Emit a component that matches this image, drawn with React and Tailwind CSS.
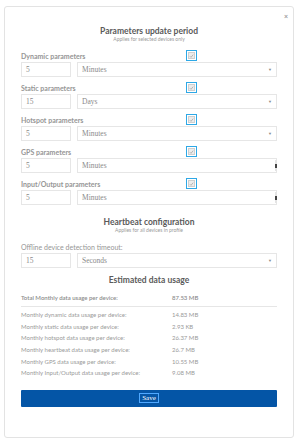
import React from "react";

const lato = { fontFamily: "Lato, 'Open Sans', sans-serif" };

// Blue-outlined checked box next to each parameter label
const Check = () => (
  <span className="absolute left-[165px] top-0 w-[11px] h-[11px] border border-[#2ea8e6] bg-white flex items-center justify-center">
    <span className="w-[7px] h-[7px] bg-[#ececec] border border-[#cfcfcf] flex items-center justify-center">
      <svg width="6" height="6" viewBox="0 0 6 6">
        <path d="M1 3.2 L2.4 4.6 L5 1.4" fill="none" stroke="#9a9a9a" strokeWidth="0.8" />
      </svg>
    </span>
  </span>
);

// Number box + unit select
const InputRow = ({ value, unit, spinner }) => (
  <div className="flex gap-[6px] h-[15px]">
    <div className="w-[50px] h-full border border-[#e6e6e6] bg-white flex items-center pl-[4px] text-[7.5px] text-[#8a8a8a] font-['Liberation_Serif',serif]">
      {value}
    </div>
    <div className="relative flex-1 h-full border border-[#e6e6e6] bg-white flex items-center pl-[4px] text-[7.5px] text-[#8a8a8a] font-['Liberation_Serif',serif]">
      {unit}
      {spinner ? (
        <span className="absolute right-[-1px] top-[1px] bottom-[1px] w-[2px] bg-[#e4e4e4] flex items-center justify-center">
          <span className="w-[2px] h-[4px] bg-[#444]" />
        </span>
      ) : (
        <span className="absolute right-[4px] top-[4px] text-[4px] text-[#888]">▼</span>
      )}
    </div>
  </div>
);

const ParamGroup = ({ label, value, unit, spinner }) => (
  <div className="flex flex-col">
    <div className="relative h-[12px] text-[7px] font-bold text-[#969696] leading-[12px]">
      {label}
      <Check />
    </div>
    <InputRow value={value} unit={unit} spinner={spinner} />
  </div>
);

const usage = [
  ["Monthly dynamic data usage per device:", "14.83 MB"],
  ["Monthly static data usage per device:", "2.93 KB"],
  ["Monthly hotspot data usage per device:", "26.37 MB"],
  ["Monthly heartbeat data usage per device:", "26.7 MB"],
  ["Monthly GPS data usage per device:", "10.55 MB"],
  ["Monthly Input/Output data usage per device:", "9.08 MB"],
];

const App = () => {
  return (
    <div className="w-[300px] h-[443px] bg-white pt-[6px] pl-[4px]" style={lato}>
      <div className="relative w-[290px] h-[432px] border border-[#e3e3e3] rounded-[3px] bg-white px-[16px]">
        <span className="absolute right-[5px] top-[6px] text-[7px] font-bold text-[#9a9a9a] leading-none">×</span>

        <div className="pt-[19px] text-center">
          <div className="text-[8.5px] font-bold text-[#5a5a5a] leading-[10px]">Parameters update period</div>
          <div className="text-[5px] text-[#9a9a9a] leading-[7px]">Applies for selected devices only</div>
        </div>

        <div className="mt-[7px] flex flex-col gap-[5px]">
          <ParamGroup label="Dynamic parameters" value="5" unit="Minutes" />
          <ParamGroup label="Static parameters" value="15" unit="Days" />
          <ParamGroup label="Hotspot parameters" value="5" unit="Minutes" />
          <ParamGroup label="GPS parameters" value="5" unit="Minutes" spinner />
          <ParamGroup label="Input/Output parameters" value="5" unit="Minutes" spinner />
        </div>

        <div className="mt-[12px] text-center">
          <div className="text-[8.5px] font-bold text-[#5a5a5a] leading-[10px]">Heartbeat configuration</div>
          <div className="text-[5px] text-[#9a9a9a] leading-[7px]">Applies for all devices in profile</div>
        </div>

        <div className="mt-[7px]">
          <div className="h-[12px] text-[7px] text-[#969696] leading-[12px]">Offline device detection timeout:</div>
          <InputRow value="15" unit="Seconds" />
        </div>

        <div className="mt-[7px] text-center text-[8.5px] font-bold text-[#5a5a5a] leading-[10px]">Estimated data usage</div>

        <div className="mt-[9px] flex text-[6px] font-semibold text-[#8c8c8c] leading-[8px] pb-[4px] border-b border-[#e6e6e6]">
          <span className="w-[151px]">Total Monthly data usage per device:</span>
          <span>87.53 MB</span>
        </div>

        <div className="mt-[2px] flex flex-col">
          {usage.map(([k, v]) => (
            <div key={k} className="flex h-[11.6px] items-center text-[6px] text-[#9a9a9a]">
              <span className="w-[151px]">{k}</span>
              <span>{v}</span>
            </div>
          ))}
        </div>

        <button className="mt-[11px] w-full h-[17px] bg-[#0455a6] rounded-[1px] flex items-center justify-center">
          <span className="px-[2px] border border-[#4fa8ff] text-[7px] text-white font-['Liberation_Serif',serif] leading-[8px]">Save</span>
        </button>
      </div>
    </div>
  );
};

export default App;
